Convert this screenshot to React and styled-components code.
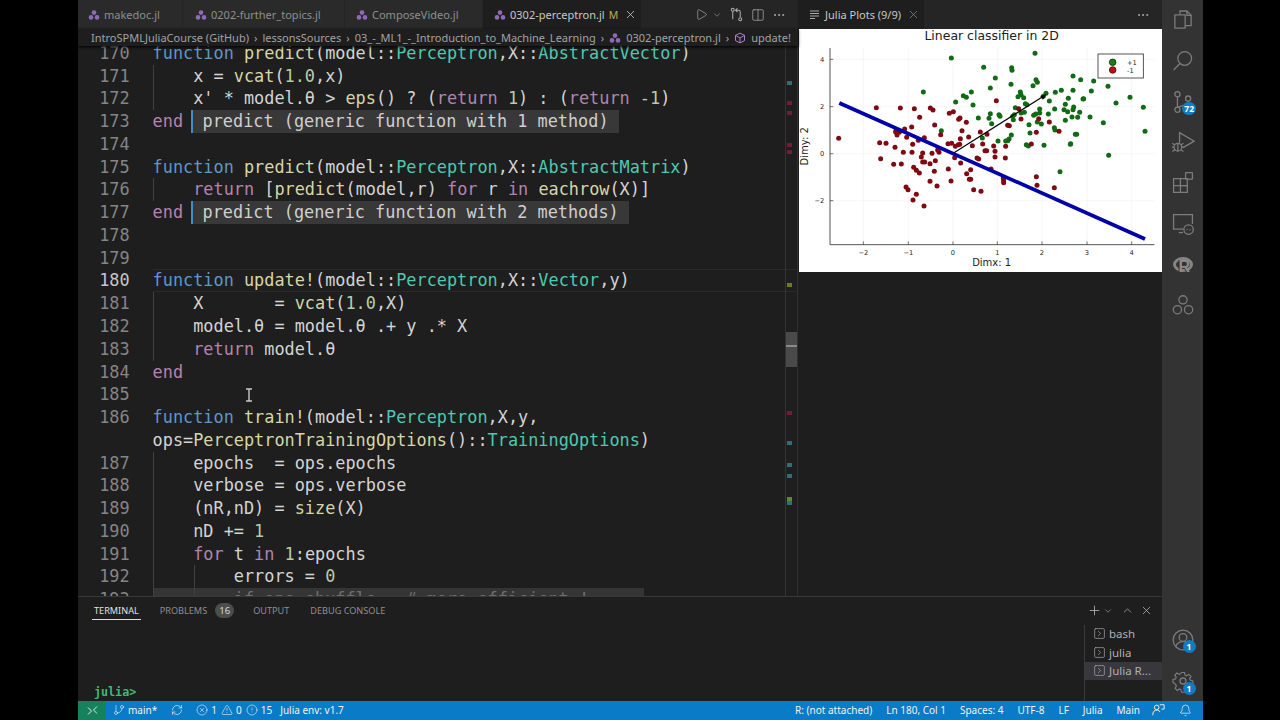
import React from "react";
import styled, { createGlobalStyle } from "styled-components";
import {
  Bell,
  ChevronDown,
  ChevronUp,
  CircleAlert,
  CircleX,
  Columns2,
  Ellipsis,
  GitBranch,
  Play,
  Plus,
  RefreshCw,
  SquareChevronRight,
  TriangleAlert,
  X,
} from "lucide-react";

const GlobalStyle = createGlobalStyle`
  html, body {
    margin: 0;
    padding: 0;
    background: #000;
  }
  * {
    box-sizing: border-box;
  }
  svg {
    flex-shrink: 0;
  }
`;

const UI_FONT = `"Noto Sans", "Open Sans", sans-serif`;
const MONO_FONT = `"DejaVu Sans Mono", "Liberation Mono", monospace`;

const TOKEN_COLORS = {
  k: "#5f97c9",
  f: "#d6d6a8",
  t: "#4ec9b0",
  r: "#b583b0",
  n: "#b5cea8",
  p: "#d4d4d4",
  d: "#6e6e6e",
};

const Shell = styled.div`
  width: 1280px;
  height: 720px;
  padding: 0 77px 0 78px;
  display: flex;
  flex-direction: column;
  overflow: hidden;
  background: #000;
  font-family: ${UI_FONT};
`;

const Workbench = styled.div`
  flex: 1;
  min-height: 0;
  display: flex;
`;

const MainColumn = styled.div`
  flex: 1;
  min-width: 0;
  display: flex;
  flex-direction: column;
`;

const Groups = styled.div`
  flex: 1;
  min-height: 0;
  display: flex;
`;

const EditorGroup = styled.section`
  width: 720px;
  display: flex;
  flex-direction: column;
  background: #1e1e1e;
`;

const PlotGroup = styled.section`
  flex: 1;
  display: flex;
  flex-direction: column;
  background: #1e1e1e;
`;

const TabBar = styled.div`
  height: 29px;
  flex: none;
  display: flex;
  align-items: stretch;
  background: #252526;
`;

const Tab = styled.div`
  width: ${(p) => p.$w}px;
  flex: none;
  padding-left: ${(p) => p.$pl}px;
  display: flex;
  align-items: center;
  gap: 4px;
  font-size: 11px;
  color: ${(p) => (p.$active ? "#c8c8c8" : "#8f8f8f")};
  background: ${(p) => (p.$active ? "#1e1e1e" : "#2a2a2a")};
  border-right: 1px solid #252526;
  white-space: nowrap;
`;

const ModifiedMark = styled.span`
  font-size: 10.5px;
  color: #c2a565;
`;

const CloseTab = styled(X)`
  margin-left: ${(p) => p.$ml}px;
  color: ${(p) => p.color};
`;

const TabActions = styled.div`
  margin-left: auto;
  padding-right: 12px;
  display: flex;
  align-items: center;
  gap: 7px;
  color: #b0b0b0;
`;

const RunIcon = styled(Play)`
  margin-right: -3px;
`;

const Breadcrumbs = styled.div`
  height: 17px;
  flex: none;
  padding-left: 13px;
  display: flex;
  align-items: center;
  gap: 5px;
  position: relative;
  z-index: 2;
  font-size: 11px;
  color: #a3a3a3;
  background: #1e1e1e;
  box-shadow: 0 1px 3px #000;
  white-space: nowrap;
`;

const Editor = styled.div`
  flex: 1;
  min-height: 0;
  position: relative;
  overflow: hidden;
  border-right: 1px solid #303030;
`;

const CodeList = styled.div`
  margin-top: -4.2px;
`;

const Row = styled.div`
  height: 22.77px;
  display: flex;
  font-family: ${MONO_FONT};
  font-size: 16.86px;
  line-height: 22.77px;
  white-space: pre;
`;

const LineNo = styled.div`
  width: 74.6px;
  flex: none;
  padding-right: 23px;
  text-align: right;
  color: ${(p) => (p.$current ? "#c6c6c6" : "#858585")};
`;

const CodeCell = styled.div`
  flex: ${(p) => (p.$band ? "none" : 1)};
  width: ${(p) => (p.$band ? "491px" : "auto")};
  color: ${TOKEN_COLORS.p};
  background-color: ${(p) => (p.$band ? "#353535" : "transparent")};
  background-repeat: no-repeat;
  background-image: ${(p) =>
    p.$guides > 0
      ? Array(p.$guides).fill("linear-gradient(#404040, #404040)").join(", ")
      : "none"};
  background-size: 1px 100%;
  background-position: ${(p) => (p.$guides > 1 ? "0 0, 41px 0" : "0 0")};
  ${(p) => p.$current && "box-shadow: inset 0 1px #2a2a2a, inset 0 -1px #2a2a2a;"}
`;

const Token = styled.span`
  color: ${(p) => TOKEN_COLORS[p.$k]};
`;

const Hint = styled.span`
  display: inline-block;
  margin-left: 7.5px;
  padding: 0 10px;
  color: #cfcfcf;
  background: #383838;
  border-left: 2px solid #3f8fc4;
`;

const Ruler = styled.div`
  position: absolute;
  top: 0;
  right: 0;
  bottom: 0;
  width: 12px;
  border-left: 1px solid #343434;
`;

const RulerMark = styled.div`
  position: absolute;
  top: ${(p) => p.$y - 46}px;
  left: 1px;
  width: 5px;
  height: 4px;
  background: ${(p) => p.$c};
`;

const ScrollThumb = styled.div`
  position: absolute;
  top: 286px;
  left: 0;
  right: 0;
  height: 35px;
  background: #4a4a4a;

  &::after {
    content: "";
    position: absolute;
    top: 13px;
    left: 0;
    right: 0;
    height: 2px;
    background: #8a8a8a;
  }
`;

const TextCursor = styled.svg`
  position: absolute;
  left: 165px;
  top: 342px;
  color: #c8c8c8;
`;

const PlotFrame = styled.div`
  height: 243px;
  flex: none;
  margin-left: 1px;
  background: #fff;
`;

const PlotSvg = styled.svg`
  display: block;
  width: 100%;
  height: 100%;
`;

const ChartText = styled.text`
  font-family: "DejaVu Sans", sans-serif;
  font-size: ${(p) => p.$size}px;
  fill: #222;
`;

const Panel = styled.section`
  height: 105px;
  flex: none;
  position: relative;
  display: flex;
  flex-direction: column;
  background: #1e1e1e;
  border-top: 1px solid #383838;
`;

const PanelHead = styled.div`
  height: 27.5px;
  flex: none;
  padding: 0 9px 0 14px;
  display: flex;
  align-items: center;
`;

const PanelTab = styled.div`
  margin-right: ${(p) => p.$mr}px;
  padding: 0 2px;
  height: 18px;
  display: flex;
  align-items: center;
  font-size: 9.15px;
  color: ${(p) => (p.$active ? "#e0e0e0" : "#8f8f8f")};
  border-bottom: 1px solid ${(p) => (p.$active ? "#e0e0e0" : "transparent")};
`;

const CountBadge = styled.span`
  width: 19px;
  height: 15px;
  margin-right: 17px;
  border-radius: 8px;
  font-size: 9.5px;
  line-height: 15px;
  text-align: center;
  color: #d8d8d8;
  background: #4d4d4d;
`;

const PanelActions = styled.div`
  margin-left: auto;
  display: flex;
  align-items: center;
  color: #c4c4c4;
`;

const PanelAction = styled.span`
  display: flex;
  margin-left: ${(p) => p.$ml}px;
`;

const PanelBody = styled.div`
  flex: 1;
  min-height: 0;
  display: flex;
`;

const TerminalArea = styled.div`
  flex: 1;
  padding-left: 16px;
  display: flex;
  align-items: flex-end;
  font-family: ${MONO_FONT};
  font-size: 11.7px;
  font-weight: 700;
  line-height: 17px;
  color: #3fb976;
`;

const TerminalList = styled.div`
  width: 78px;
  flex: none;
  border-left: 1px solid #3a3a3a;
`;

const TerminalItem = styled.div`
  height: 18.5px;
  padding-left: 8px;
  display: flex;
  align-items: center;
  gap: 3px;
  font-size: 11.5px;
  color: #b0b0b0;
  background: ${(p) => (p.$active ? "#37373d" : "transparent")};
  white-space: nowrap;
`;

const ActivityBar = styled.nav`
  width: 41px;
  flex: none;
  display: flex;
  flex-direction: column;
  justify-content: space-between;
  color: #7c7c7c;
  background: #333;
`;

const ActivityGroup = styled.div`
  display: flex;
  flex-direction: column;
`;

const ActivityItem = styled.div`
  height: 40.7px;
  position: relative;
  display: flex;
  align-items: center;
  justify-content: center;
`;

const ActivityBadge = styled.span`
  position: absolute;
  right: ${(p) => p.$right}px;
  bottom: ${(p) => p.$bottom}px;
  min-width: 13px;
  height: 13px;
  padding: 0 2px;
  border-radius: 7px;
  font-size: 8.5px;
  font-weight: 700;
  line-height: 13px;
  text-align: center;
  color: #fff;
  background: #0f7dc2;
`;

const RLogo = styled.div`
  width: 20px;
  height: 15px;
  position: relative;
  border: 3px solid #858585;
  border-radius: 50%;
`;

const RLetter = styled.span`
  position: absolute;
  left: 3px;
  top: -1px;
  font-family: "Liberation Sans", sans-serif;
  font-size: 16px;
  font-weight: 700;
  line-height: 16px;
  color: #8c8c8c;
  text-shadow: -1px 0 #333;
`;

const StatusBar = styled.footer`
  height: 19px;
  flex: none;
  padding-bottom: 0;
  display: flex;
  align-items: center;
  font-size: 10px;
  line-height: 17px;
  color: #f2f2f2;
  background: #0a7bc6;
  white-space: nowrap;
`;

const RemoteButton = styled.div`
  width: 28px;
  height: 100%;
  display: flex;
  align-items: center;
  justify-content: center;
  background: #16825d;
`;

const StatusGroup = styled.div`
  display: flex;
  align-items: center;
  gap: ${(p) => p.$gap}px;
  margin-left: ${(p) => p.$ml || 0}px;
`;

const StatusItem = styled.span`
  display: flex;
  align-items: center;
  gap: 3px;
  margin-left: ${(p) => p.$ml || 0}px;
  padding-bottom: 1px;
`;

const StatusRight = styled.div`
  margin-left: auto;
  padding: 0 11px 1px 0;
  display: flex;
  align-items: center;
  gap: 14px;
`;

const FeedbackSlot = styled.span`
  display: flex;
  margin-left: -3px;
`;

function JuliaDots({ size = 12 }) {
  return (
    <svg width={size} height={size} viewBox="0 0 12 12" fill="#8e6bb8">
      <circle cx="6" cy="3.6" r="2.3" />
      <circle cx="3" cy="8.4" r="2.3" />
      <circle cx="9" cy="8.4" r="2.3" />
    </svg>
  );
}

function CompareIcon() {
  return (
    <svg width="15" height="15" viewBox="0 0 16 16" fill="none" stroke="currentColor" strokeWidth="1.1">
      <circle cx="4" cy="3" r="1.6" />
      <circle cx="12" cy="13" r="1.6" />
      <path d="M4 5v8M12 11V5.5a2 2 0 0 0-2-2H7.5M9 1.5 7 3.5l2 2" />
    </svg>
  );
}

function CubeIcon() {
  return (
    <svg width="12" height="12" viewBox="0 0 16 16" fill="none" stroke="#b180d7" strokeWidth="1.3">
      <path d="M8 1.5 14 4.5v7L8 14.5 2 11.5v-7zM2 4.5 8 8l6-3.5M8 8v6.5" />
    </svg>
  );
}

function PreviewIcon() {
  return (
    <svg width="12" height="12" viewBox="0 0 12 12" stroke="#aaa" strokeWidth="1.2">
      <path d="M1 2h9M1 4.5h9M1 7h9M1 9.5h5" />
    </svg>
  );
}

function RemoteIcon() {
  return (
    <svg width="11" height="11" viewBox="0 0 11 11" fill="none" stroke="#e8e8e8" strokeWidth="1">
      <path d="M1 9.5 4.5 6 1 2.5M10 1.5 6.5 5 10 8.500" />
    </svg>
  );
}

function FeedbackIcon() {
  return (
    <svg width="14" height="14" viewBox="0 0 16 16" fill="none" stroke="#eee" strokeWidth="1.1">
      <circle cx="6.5" cy="5" r="2.6" />
      <path d="M2 14c0-4 2-6 4.500-6s3 1 3.600 2.400M10 2h5v5h-3" />
    </svg>
  );
}

const activityIcon = { width: 24, height: 24, fill: "none", stroke: "currentColor", strokeWidth: 1.5 };

function FilesIcon() {
  return (
    <svg {...activityIcon} viewBox="0 0 28 28">
      <path d="M10.500 7V3.500h8l5 5V20.500H16.500" />
      <path d="M18.500 3.500v5h5" />
      <path d="M4.500 8h12v15.500h-12z" strokeLinejoin="round" />
    </svg>
  );
}

function SearchIcon() {
  return (
    <svg {...activityIcon} viewBox="0 0 28 28">
      <circle cx="16" cy="11" r="8" />
      <path d="M10.500 17 3 24.500" />
    </svg>
  );
}

function SourceControlIcon() {
  return (
    <svg {...activityIcon} viewBox="0 0 28 28">
      <circle cx="7.500" cy="5" r="3" />
      <circle cx="7.500" cy="23" r="3" />
      <circle cx="20" cy="10" r="3" />
      <path d="M7.500 8v12M20 13c0 4-4 5-7 5.500-2.500.5-4 1-5 2" />
    </svg>
  );
}

function DebugIcon() {
  return (
    <svg {...activityIcon} viewBox="0 0 28 28">
      <path d="M10 15V3l17 10-13 7.500" />
      <circle cx="8" cy="20" r="4.500" />
      <path d="M8 15.500V24.500M1.500 15.500l3 2M14.500 15.500l-3 2M1 20h2.500M12.500 20H15M1.500 25l3-2M14.500 25l-3-2" />
    </svg>
  );
}

function ExtensionsIcon() {
  return (
    <svg {...activityIcon} viewBox="0 0 28 28">
      <path d="M3 9h8v16H3zM3 17h16v8h-8" />
      <path d="M11 17h8V9h-8" />
      <rect x="17" y="2" width="8" height="7.500" rx="0.5" />
    </svg>
  );
}

function RemoteExplorerIcon() {
  return (
    <svg {...activityIcon} viewBox="0 0 28 28">
      <path d="M14 20H3V3h22v11" />
      <path d="M9 24h5" />
      <circle cx="20.500" cy="20.500" r="5.500" />
      <path d="M18 21.500l1.500-2M21.500 22l1.500-2" strokeWidth="1" />
    </svg>
  );
}

function PackagesIcon() {
  return (
    <svg {...activityIcon} viewBox="0 0 28 28">
      <circle cx="14" cy="8" r="4.800" />
      <circle cx="7.500" cy="19.500" r="4.800" />
      <circle cx="20.500" cy="19.500" r="4.800" />
    </svg>
  );
}

function AccountIcon() {
  return (
    <svg {...activityIcon} viewBox="0 0 28 28">
      <circle cx="14" cy="14" r="11.500" />
      <circle cx="14" cy="11" r="4.500" />
      <path d="M5.500 21.500c1.500-3.500 4.500-5.500 8.500-5.500s7 2 8.500 5.500" />
    </svg>
  );
}

function GearIcon() {
  return (
    <svg {...activityIcon} viewBox="0 0 28 28">
      <circle cx="14" cy="14" r="3.500" />
      <path d="M12 3h4l.7 3.300 2 .9 2.900-1.800 2.800 2.800-1.800 2.900.9 2 3.300.7v4l-3.300.7-.9 2 1.800 2.900-2.800 2.800-2.900-1.800-2 .9-.7 3.300h-4l-.7-3.300-2-.9-2.900 1.800-2.800-2.800 1.800-2.900-.9-2L1 16v-4l3.300-.7.9-2-1.800-2.900 2.800-2.800 2.900 1.800 2-.9z" transform="translate(1.400 1.400) scale(.9)" />
    </svg>
  );
}

// [lineNumber, indentGuides, tokens, hint]
const CODE = [
  [170, 0, [["k", "function"], ["p", " "], ["f", "predict"], ["p", "(model::"], ["t", "Perceptron"], ["p", ",X::"], ["t", "AbstractVector"], ["p", ")"]]],
  [171, 1, [["p", "    x = "], ["f", "vcat"], ["p", "("], ["n", "1.0"], ["p", ",x)"]]],
  [172, 1, [["p", "    x' * model.θ > "], ["f", "eps"], ["p", "() ? ("], ["r", "return"], ["p", " "], ["n", "1"], ["p", ") : ("], ["r", "return"], ["p", " "], ["n", "-1"], ["p", ")"]]],
  [173, 0, [["r", "end"]], "predict (generic function with 1 method)"],
  [174, 0, []],
  [175, 0, [["k", "function"], ["p", " "], ["f", "predict"], ["p", "(model::"], ["t", "Perceptron"], ["p", ",X::"], ["t", "AbstractMatrix"], ["p", ")"]]],
  [176, 1, [["p", "    "], ["r", "return"], ["p", " ["], ["f", "predict"], ["p", "(model,r) "], ["r", "for"], ["p", " r "], ["r", "in"], ["p", " "], ["f", "eachrow"], ["p", "(X)]"]]],
  [177, 0, [["r", "end"]], "predict (generic function with 2 methods)"],
  [178, 0, []],
  [179, 0, []],
  [180, 0, [["k", "function"], ["p", " "], ["f", "update!"], ["p", "(model::"], ["t", "Perceptron"], ["p", ",X::"], ["t", "Vector"], ["p", ",y)"]]],
  [181, 1, [["p", "    X       = "], ["f", "vcat"], ["p", "("], ["n", "1.0"], ["p", ",X)"]]],
  [182, 1, [["p", "    model.θ = model.θ .+ y .* X"]]],
  [183, 1, [["p", "    "], ["r", "return"], ["p", " model.θ"]]],
  [184, 0, [["r", "end"]]],
  [185, 0, []],
  [186, 0, [["k", "function"], ["p", " "], ["f", "train!"], ["p", "(model::"], ["t", "Perceptron"], ["p", ",X,y,"]]],
  ["", 0, [["p", "ops="], ["f", "PerceptronTrainingOptions"], ["p", "()::"], ["t", "TrainingOptions"], ["p", ")"]]],
  [187, 1, [["p", "    epochs  = ops.epochs"]]],
  [188, 1, [["p", "    verbose = ops.verbose"]]],
  [189, 1, [["p", "    (nR,nD) = "], ["f", "size"], ["p", "(X)"]]],
  [190, 1, [["p", "    nD += "], ["n", "1"]]],
  [191, 1, [["p", "    "], ["r", "for"], ["p", " t "], ["r", "in"], ["p", " "], ["n", "1"], ["p", ":epochs"]]],
  [192, 2, [["p", "        errors = "], ["n", "0"]]],
  [193, 2, [["d", "        if ops.shuffle   # more efficient !"]]],
];

const RULER_MARKS = [
  [81, "#2f6f78"],
  [101, "#6e1f36"],
  [111, "#6e1f36"],
  [143, "#6e1f36"],
  [150, "#6e1f36"],
  [283, "#6f7a25"],
  [411, "#6e1f36"],
  [441, "#2f6f78"],
  [463, "#2f6f78"],
  [474, "#2f6f78"],
  [497, "#5f8a2a"],
  [501, "#2f6f78"],
];

// plot points, in the coordinates of the 3x plot drawing
const GREEN_POINTS = [
  [471,175],[722,161],[568,203],[652,204],[653,212],[603,235],[387,277],[531,277],[484,307],[507,288],
  [516,293],[536,316],[588,265],[650,254],[725,240],[729,248],[716,258],[836,229],[859,240],[898,244],
  [941,260],[801,272],[836,272],[891,274],[783,278],[755,281],[747,290],[678,277],[680,285],[671,291],
  [688,294],[822,296],[866,298],[868,297],[765,304],[693,312],[698,315],[965,310],[1007,293],[1047,323],
  [1052,395],[813,314],[809,330],[838,322],[836,330],[820,336],[856,338],[781,328],[736,328],[736,340],
  [724,343],[718,347],[762,343],[690,338],[680,340],[663,324],[660,345],[655,350],[657,360],[614,345],
  [617,350],[588,342],[552,355],[584,356],[592,372],[441,393],[887,352],[833,352],[850,353],[813,362],
  [927,369],[729,367],[741,373],[704,375],[780,384],[782,391],[707,400],[843,404],[847,404],[651,406],
  [644,418],[640,423],[634,424],[611,424],[564,415],[696,435],[702,439],[749,437],[829,432],[828,434],
  [943,467],[797,516],
];

const RED_POINTS = [
  [133,416],[246,324],[318,325],[360,327],[408,325],[416,331],[376,353],[465,341],[477,336],[606,303],
  [497,355],[493,359],[516,368],[421,376],[352,382],[331,388],[305,393],[315,398],[308,406],[304,397],
  [503,393],[439,405],[390,414],[337,413],[372,422],[256,429],[275,431],[302,443],[355,434],[461,432],
  [472,431],[483,440],[492,435],[496,434],[498,417],[523,412],[558,397],[578,404],[534,438],[565,433],
  [572,453],[577,453],[598,439],[602,455],[634,440],[602,472],[633,475],[548,475],[553,478],[430,451],
  [434,458],[327,458],[353,458],[385,460],[413,461],[381,472],[385,487],[391,487],[259,477],[298,494],
  [321,493],[407,492],[423,483],[481,474],[499,490],[358,503],[366,512],[375,520],[420,515],[462,508],
  [529,510],[517,522],[525,539],[529,539],[407,545],[470,544],[428,559],[335,562],[341,570],[538,570],
  [560,575],[366,584],[356,601],[389,619],[590,508],[627,536],[628,543],[628,549],[726,531],[728,557],
  [780,564],[794,395],[711,433],[726,398],[733,357],[765,367],[680,358],[673,327],[640,377],[645,378],
];

const X_TICKS = [[207, "−2"], [342, "−1"], [476, "0"], [609, "1"], [743, "2"], [878, "3"], [1012, "4"]];
const Y_TICKS = [[179, "4"], [321, "2"], [462, "0"], [603, "−2"]];

function Plot() {
  return (
    <PlotFrame>
      <PlotSvg viewBox="15 88 1087 729">
        {X_TICKS.map(([x]) => (
          <line key={x} x1={x} x2={x} y1="145" y2="735" stroke="#f1f1f1" strokeWidth="2" />
        ))}
        {Y_TICKS.map(([y]) => (
          <line key={y} x1="107" x2="1080" y1={y} y2={y} stroke="#f1f1f1" strokeWidth="2" />
        ))}
        <path d="M107 145V735H1080" fill="none" stroke="#333" strokeWidth="2.500" />
        {X_TICKS.map(([x, label]) => (
          <g key={label}>
            <line x1={x} x2={x} y1="735" y2="725" stroke="#333" strokeWidth="2" />
            <ChartText x={x} y="767" $size={20} textAnchor="middle">{label}</ChartText>
          </g>
        ))}
        {Y_TICKS.map(([y, label]) => (
          <g key={label}>
            <line x1="107" x2="117" y1={y} y2={y} stroke="#333" strokeWidth="2" />
            <ChartText x="90" y={y + 7} $size={20} textAnchor="end">{label}</ChartText>
          </g>
        ))}
        <ChartText x="592" y="121" $size={37.4} textAnchor="middle">Linear classifier in 2D</ChartText>
        <ChartText x="592" y="800" $size={30} textAnchor="middle">Dimx: 1</ChartText>
        <ChartText x="40" y="440" $size={30} textAnchor="middle" transform="rotate(-90 40 440)">Dimy: 2</ChartText>
        {GREEN_POINTS.map(([x, y]) => (
          <circle key={`g${x}-${y}`} cx={x} cy={y} r="7.500" fill="#116a16" />
        ))}
        {RED_POINTS.map(([x, y]) => (
          <circle key={`r${x}-${y}`} cx={x} cy={y} r="7.500" fill="#7f0a12" />
        ))}
        <line x1="135" y1="310" x2="1052" y2="718" stroke="#0000a8" strokeWidth="11" />
        <line x1="478" y1="460" x2="745" y2="291" stroke="#000" strokeWidth="3.500" />
        <path d="M756 284 738 289 746 300z" fill="#000" />
        <rect x="911" y="163" width="136" height="72" fill="#fff" stroke="#333" strokeWidth="2.500" />
        <circle cx="955" cy="188" r="10" fill="#158016" stroke="#111" strokeWidth="2" />
        <circle cx="955" cy="211" r="10" fill="#c00d12" stroke="#111" strokeWidth="2" />
        <ChartText x="998" y="196" $size={20}>+1</ChartText>
        <ChartText x="998" y="219" $size={20}>-1</ChartText>
      </PlotSvg>
    </PlotFrame>
  );
}

function App() {
  return (
    <>
      <GlobalStyle />
      <Shell>
        <Workbench>
          <MainColumn>
            <Groups>
              <EditorGroup>
                <TabBar>
                  <Tab $w={105} $pl={10}><JuliaDots />makedoc.jl</Tab>
                  <Tab $w={162} $pl={12}><JuliaDots />0202-further_topics.jl</Tab>
                  <Tab $w={138} $pl={11}><JuliaDots />ComposeVideo.jl</Tab>
                  <Tab $w={159} $pl={11} $active>
                    <JuliaDots />0302-perceptron.jl
                    <ModifiedMark>M</ModifiedMark>
                    <CloseTab size={13} strokeWidth={1.5} $ml={2} color="#c8c8c8" />
                  </Tab>
                  <TabActions>
                    <RunIcon size={13} strokeWidth={1.2} />
                    <ChevronDown size={10} strokeWidth={1.3} />
                    <CompareIcon />
                    <Columns2 size={14} strokeWidth={1.2} />
                    <Ellipsis size={14} strokeWidth={1.5} />
                  </TabActions>
                </TabBar>
                <Breadcrumbs>
                  <span>IntroSPMLJuliaCourse (GitHub)</span>
                  <span>›</span>
                  <span>lessonsSources</span>
                  <span>›</span>
                  <span>03_-_ML1_-_Introduction_to_Machine_Learning</span>
                  <span>›</span>
                  <JuliaDots />
                  <span>0302-perceptron.jl</span>
                  <span>›</span>
                  <CubeIcon />
                  <span>update!</span>
                </Breadcrumbs>
                <Editor>
                  <CodeList>
                    {CODE.map(([no, guides, tokens, hint], i) => (
                      <Row key={i}>
                        <LineNo $current={no === 180}>{no}</LineNo>
                        <CodeCell $guides={guides} $current={no === 180} $band={no === 193}>
                          {tokens.map(([kind, text], j) => (
                            <Token key={j} $k={kind}>{text}</Token>
                          ))}
                          {hint && <Hint>{hint}</Hint>}
                        </CodeCell>
                      </Row>
                    ))}
                  </CodeList>
                  <TextCursor width="12" height="14" viewBox="0 0 12 14" fill="none" stroke="currentColor" strokeWidth="1.400">
                    <path d="M3 1h2.500l.5 1 .5-1H9M6 2v10M3 13h2.500l.5-1 .5 1H9" />
                  </TextCursor>
                  <Ruler>
                    {RULER_MARKS.map(([y, color]) => (
                      <RulerMark key={y} $y={y} $c={color} />
                    ))}
                    <ScrollThumb />
                  </Ruler>
                </Editor>
              </EditorGroup>
              <PlotGroup>
                <TabBar>
                  <Tab $w={127} $pl={11} $active>
                    <PreviewIcon />Julia Plots (9/9)
                    <CloseTab size={13} strokeWidth={1.3} $ml={2} color="#8f8f8f" />
                  </Tab>
                  <TabActions>
                    <Ellipsis size={14} strokeWidth={1.5} />
                  </TabActions>
                </TabBar>
                <Plot />
              </PlotGroup>
            </Groups>
            <Panel>
              <PanelHead>
                <PanelTab $active $mr={17}>TERMINAL</PanelTab>
                <PanelTab $mr={6}>PROBLEMS</PanelTab>
                <CountBadge>16</CountBadge>
                <PanelTab $mr={17}>OUTPUT</PanelTab>
                <PanelTab $mr={0}>DEBUG CONSOLE</PanelTab>
                <PanelActions>
                  <Plus size={15} strokeWidth={1.2} />
                  <PanelAction $ml={1}><ChevronDown size={10} strokeWidth={1.3} /></PanelAction>
                  <PanelAction $ml={8}><ChevronUp size={13} strokeWidth={1.2} /></PanelAction>
                  <PanelAction $ml={6}><X size={13} strokeWidth={1.3} /></PanelAction>
                </PanelActions>
              </PanelHead>
              <PanelBody>
                <TerminalArea>julia&gt;</TerminalArea>
                <TerminalList>
                  <TerminalItem><SquareChevronRight size={13} strokeWidth={1.2} />bash</TerminalItem>
                  <TerminalItem><SquareChevronRight size={13} strokeWidth={1.2} />julia</TerminalItem>
                  <TerminalItem $active><SquareChevronRight size={13} strokeWidth={1.2} />Julia R...</TerminalItem>
                </TerminalList>
              </PanelBody>
            </Panel>
          </MainColumn>
          <ActivityBar>
            <ActivityGroup>
              <ActivityItem><FilesIcon /></ActivityItem>
              <ActivityItem><SearchIcon /></ActivityItem>
              <ActivityItem>
                <SourceControlIcon />
                <ActivityBadge $right={7} $bottom={7}>72</ActivityBadge>
              </ActivityItem>
              <ActivityItem><DebugIcon /></ActivityItem>
              <ActivityItem><ExtensionsIcon /></ActivityItem>
              <ActivityItem><RemoteExplorerIcon /></ActivityItem>
              <ActivityItem><RLogo><RLetter>R</RLetter></RLogo></ActivityItem>
              <ActivityItem><PackagesIcon /></ActivityItem>
            </ActivityGroup>
            <ActivityGroup>
              <ActivityItem>
                <AccountIcon />
                <ActivityBadge $right={7.5} $bottom={7}>1</ActivityBadge>
              </ActivityItem>
              <ActivityItem>
                <GearIcon />
                <ActivityBadge $right={7.5} $bottom={6.5}>1</ActivityBadge>
              </ActivityItem>
            </ActivityGroup>
          </ActivityBar>
        </Workbench>
        <StatusBar>
          <RemoteButton><RemoteIcon /></RemoteButton>
          <StatusItem $ml={7}><GitBranch size={12} strokeWidth={1.2} />main*</StatusItem>
          <StatusItem $ml={14}><RefreshCw size={12} strokeWidth={1.3} /></StatusItem>
          <StatusGroup $gap={4} $ml={13}>
            <StatusItem><CircleX size={12} strokeWidth={1.2} />1</StatusItem>
            <StatusItem><TriangleAlert size={12} strokeWidth={1.2} />0</StatusItem>
            <StatusItem><CircleAlert size={12} strokeWidth={1.2} />15</StatusItem>
          </StatusGroup>
          <StatusItem $ml={8}>Julia env: v1.7</StatusItem>
          <StatusRight>
            <span>R: (not attached)</span>
            <span>Ln 180, Col 1</span>
            <span>Spaces: 4</span>
            <span>UTF-8</span>
            <span>LF</span>
            <span>Julia</span>
            <span>Main</span>
            <FeedbackSlot><FeedbackIcon /></FeedbackSlot>
            <Bell size={13} strokeWidth={1.3} />
          </StatusRight>
        </StatusBar>
      </Shell>
    </>
  );
}

export default App;
